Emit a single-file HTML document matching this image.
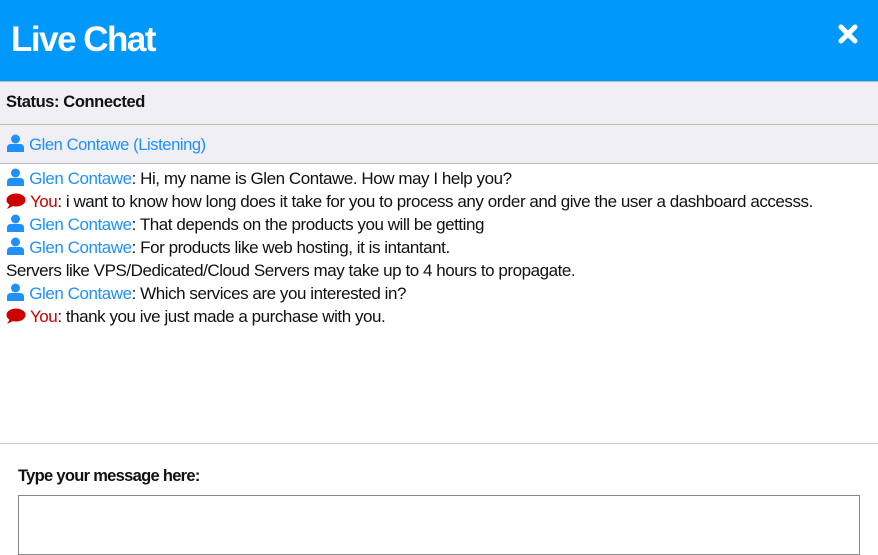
<!DOCTYPE html>
<html><head><style>
*{margin:0;padding:0;box-sizing:border-box}
body{width:878px;height:543px;overflow:hidden;background:#fff;font-family:"Liberation Sans",sans-serif;color:#111}
.hd{position:absolute;left:0;top:0;width:878px;height:82px;background:#0099fb;border-bottom:1px solid #bbb}
.hd h1{position:absolute;left:11px;top:20px;color:#fff;font-size:35px;font-weight:bold;letter-spacing:-1.5px}
.x{position:absolute;left:838px;top:24px}
.st{position:absolute;left:0;top:82px;width:878px;height:43px;background:#efeff4;border-bottom:1px solid #bbb;font-weight:bold;font-size:16.5px;letter-spacing:-0.4px;padding:11px 6px}
.ls{position:absolute;left:0;top:125px;width:878px;height:39px;background:#efeff4;border-bottom:1px solid #bbb;font-size:16.5px;letter-spacing:-0.4px;padding:9px 6px;color:#1e90ff}
.msgs{position:absolute;left:6px;top:167px;font-size:17px;line-height:23px;letter-spacing:-0.45px}
.b{color:#1e90ff}.r{color:#c00}
svg{vertical-align:-2px}
.dv{position:absolute;left:0;top:443px;width:878px;border-top:1px solid #ccc}
.lb{position:absolute;left:18px;top:467px;font-size:16.5px;font-weight:bold;letter-spacing:-0.7px}
.ta{position:absolute;left:18px;top:495px;width:842px;height:60px;border:1px solid #888}
</style></head><body>
<div class="hd"><h1>Live Chat</h1>
<svg class="x" width="20" height="20" viewBox="0 0 20 20"><path d="M3 3L17 17M17 3L3 17" stroke="#fff" stroke-width="5" stroke-linecap="round"/></svg></div>
<div class="st">Status: Connected</div>
<div class="ls"><svg width="19" height="18" viewBox="0 0 19 18"><circle cx="9.5" cy="5" r="4.5" fill="#1e90ff"/><path d="M1 18V14Q1 10 5 10H14Q18 10 18 14V18Z" fill="#1e90ff"/></svg> Glen Contawe (Listening)</div>
<div class="msgs">
<div><svg width="19" height="18" viewBox="0 0 19 18"><circle cx="9.5" cy="5" r="4.5" fill="#1e90ff"/><path d="M1 18V14Q1 10 5 10H14Q18 10 18 14V18Z" fill="#1e90ff"/></svg> <span class="b">Glen Contawe</span>: Hi, my name is Glen Contawe. How may I help you?</div>
<div><svg width="20" height="16" viewBox="0 0 20 16"><ellipse cx="10" cy="7" rx="9.5" ry="6.5" fill="#c00"/><path d="M4 11L1 16L9 12Z" fill="#c00"/></svg> <span class="r">You</span>: i want to know how long does it take for you to process any order and give the user a dashboard accesss.</div>
<div><svg width="19" height="18" viewBox="0 0 19 18"><circle cx="9.5" cy="5" r="4.5" fill="#1e90ff"/><path d="M1 18V14Q1 10 5 10H14Q18 10 18 14V18Z" fill="#1e90ff"/></svg> <span class="b">Glen Contawe</span>: That depends on the products you will be getting</div>
<div><svg width="19" height="18" viewBox="0 0 19 18"><circle cx="9.5" cy="5" r="4.5" fill="#1e90ff"/><path d="M1 18V14Q1 10 5 10H14Q18 10 18 14V18Z" fill="#1e90ff"/></svg> <span class="b">Glen Contawe</span>: For products like web hosting, it is intantant.</div>
<div>Servers like VPS/Dedicated/Cloud Servers may take up to 4 hours to propagate.</div>
<div><svg width="19" height="18" viewBox="0 0 19 18"><circle cx="9.5" cy="5" r="4.5" fill="#1e90ff"/><path d="M1 18V14Q1 10 5 10H14Q18 10 18 14V18Z" fill="#1e90ff"/></svg> <span class="b">Glen Contawe</span>: Which services are you interested in?</div>
<div><svg width="20" height="16" viewBox="0 0 20 16"><ellipse cx="10" cy="7" rx="9.5" ry="6.5" fill="#c00"/><path d="M4 11L1 16L9 12Z" fill="#c00"/></svg> <span class="r">You</span>: thank you ive just made a purchase with you.</div>
</div>
<div class="dv"></div>
<div class="lb">Type your message here:</div>
<div class="ta"></div>
</body></html>
